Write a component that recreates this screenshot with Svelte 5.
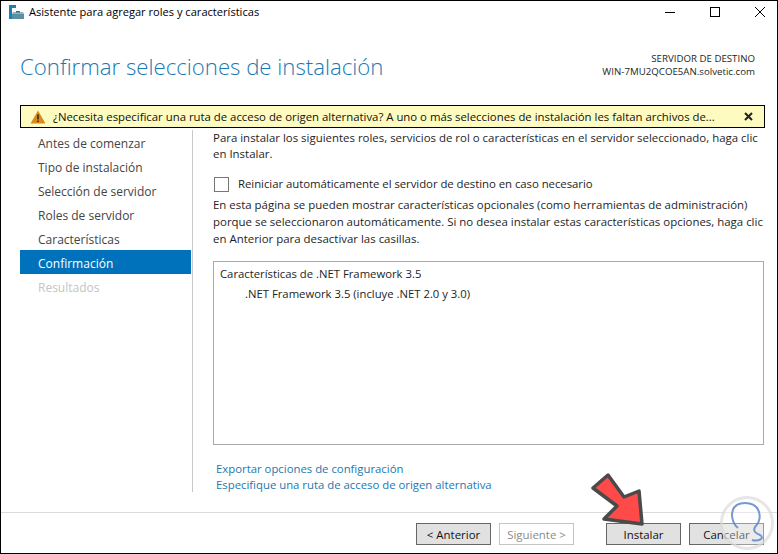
<script>
  const steps = [
    { label: "Antes de comenzar" },
    { label: "Tipo de instalación" },
    { label: "Selección de servidor" },
    { label: "Roles de servidor" },
    { label: "Características" },
    { label: "Confirmación", active: true },
    { label: "Resultados", disabled: true }
  ];
</script>

<div class="window">
  <header class="titlebar">
    <svg class="app-icon" width="16" height="16" viewBox="0 0 16 16">
      <rect x="0" y="0" width="7" height="3" fill="#1f7fb5" />
      <rect x="0" y="3" width="3" height="11" fill="#1f7fb5" />
      <path d="M3 9h12v5H3z" fill="#5b8fa3" />
      <path d="M4 7h10l1 2H3z" fill="#8fb6c4" />
      <rect x="7" y="6" width="4" height="1.5" fill="#47697a" />
    </svg>
    <span class="title">Asistente para agregar roles y características</span>
    <div class="controls">
      <svg width="12" height="12" viewBox="0 0 12 12"><path d="M1 6.5h10" stroke="#000" /></svg>
      <svg width="12" height="12" viewBox="0 0 12 12"><rect x="1.5" y="1.5" width="9" height="9" fill="none" stroke="#000" /></svg>
      <svg width="12" height="12" viewBox="0 0 12 12"><path d="M1 1l10 10M11 1L1 11" stroke="#000" fill="none" /></svg>
    </div>
  </header>

  <section class="heading">
    <h1>Confirmar selecciones de instalación</h1>
    <div class="server">
      <div>SERVIDOR DE DESTINO</div>
      <div>WIN-7MU2QCOE5AN.solvetic.com</div>
    </div>
  </section>

  <div class="banner">
    <svg class="banner-icon" width="16" height="14" viewBox="0 0 16 14">
      <path d="M8 0.5L15.5 13.5H0.5z" fill="#d98a1f" />
      <rect x="7.2" y="4.5" width="1.6" height="5" fill="#3a2a10" />
      <rect x="7.2" y="10.5" width="1.6" height="1.6" fill="#3a2a10" />
    </svg>
    <span class="banner-text">¿Necesita especificar una ruta de acceso de origen alternativa? A uno o más selecciones de instalación les faltan archivos de...</span>
    <svg class="banner-close" width="9" height="9" viewBox="0 0 9 9">
      <path d="M1 1l7 7M8 1L1 8" stroke="#222" stroke-width="2" />
    </svg>
  </div>

  <div class="body">
    <nav class="steps">
      {#each steps as step}
        <div class="step" class:active={step.active} class:disabled={step.disabled}>{step.label}</div>
      {/each}
    </nav>
    <main class="content">
      <p class="intro">Para instalar los siguientes roles, servicios de rol o características en el servidor seleccionado, haga clic en Instalar.</p>
      <label class="restart"><span class="box"></span>Reiniciar automáticamente el servidor de destino en caso necesario</label>
      <p class="note">En esta página se pueden mostrar características opcionales (como herramientas de administración) porque se seleccionaron automáticamente. Si no desea instalar estas características opciones, haga clic en Anterior para desactivar las casillas.</p>
      <div class="list">
        <div>Características de .NET Framework 3.5</div>
        <div class="indent">.NET Framework 3.5 (incluye .NET 2.0 y 3.0)</div>
      </div>
      <div class="links">
        <span>Exportar opciones de configuración</span>
        <span>Especifique una ruta de acceso de origen alternativa</span>
      </div>
    </main>
  </div>

  <footer class="footer">
    <button>&lt; Anterior</button>
    <button class="off">Siguiente &gt;</button>
    <button class="install">Instalar</button>
    <button>Cancelar</button>
  </footer>

  <svg class="arrow" width="80" height="70" viewBox="0 0 80 70">
    <path d="M5 18L20 5L36 27L51 21L54 54L16 49L29 36z" fill="#ff4a4a" stroke="#4a4a4a" stroke-width="3.5" stroke-linejoin="round" />
  </svg>

  <svg class="mark" width="56" height="56" viewBox="0 0 56 56">
    <circle cx="28" cy="28" r="25.5" fill="#fff" fill-opacity="0.35" stroke="#dcdcdc" stroke-opacity="0.7" stroke-width="3" />
    <path d="M19 33C11 27 9 8 26 8C42 8 44 24 36 32C34 36 36 38 41 40C46 43 40 47 33 45" fill="none" stroke="#5f86c8" stroke-opacity="0.85" stroke-width="2" />
  </svg>
</div>

<style>
  :global(body) {
    margin: 0;
  }
  .window {
    position: relative;
    width: 778px;
    height: 554px;
    box-sizing: border-box;
    border: 1px solid #000;
    background: #fff;
    color: #1e1e1e;
    font-family: "Open Sans", "Noto Sans", sans-serif;
    font-size: 11.45px;
    display: flex;
    flex-direction: column;
    overflow: hidden;
  }
  .titlebar {
    height: 23px;
    display: flex;
    align-items: center;
    padding-left: 8px;
    gap: 4px;
    color: #000;
  }
  .title {
    font-size: 11.1px;
    margin-bottom: 2px;
  }
  .controls {
    margin-left: auto;
    margin-bottom: 2px;
    display: flex;
    gap: 33px;
    padding-right: 11px;
  }
  .heading {
    height: 81px;
    padding: 0 22px 0 19px;
    display: flex;
    justify-content: space-between;
    align-items: flex-start;
  }
  h1 {
    margin: 27px 0 0;
    font-size: 22.2px;
    font-weight: 300;
    color: #1a79b0;
  }
  .server {
    margin-top: 28px;
    text-align: right;
    font-size: 9.7px;
    line-height: 13px;
  }
  .banner {
    height: 21px;
    margin: 0 12px 0 19px;
    padding-left: 9px;
    border: 1px solid #000;
    background: #fdfbc0;
    display: flex;
    align-items: center;
    gap: 7px;
    color: #111;
    font-size: 11.36px;
  }
  .banner-icon,
  .banner-close {
    flex: none;
  }
  .banner-text {
    flex: 1;
    min-width: 0;
    white-space: nowrap;
  }
  .banner-close {
    margin-right: 11px;
  }
  .body {
    flex: 1;
    display: flex;
    padding: 2px 0 0 19px;
  }
  .steps {
    width: 171px;
    height: 362px;
    box-sizing: border-box;
    flex: none;
  }
  .step {
    height: 24px;
    line-height: 27px;
    padding-left: 18px;
    color: #444;
    font-size: 12px;
  }
  .step.active {
    background: #0072bc;
    color: #fff;
  }
  .step.disabled {
    color: #c4c4c4;
  }
  .content {
    margin-left: 1px;
    width: 576px;
    height: 362px;
    box-sizing: border-box;
    border-left: 1px solid #c8c8c8;
    padding-left: 20px;
    line-height: 16px;
  }
  p {
    margin: 0;
  }
  .restart {
    margin-top: 13px;
    display: flex;
    align-items: center;
    height: 18px;
    font-size: 11.4px;
    letter-spacing: -0.05px;
  }
  .box {
    width: 13px;
    height: 13px;
    border: 1px solid #777;
    margin: 0 9px 0 1px;
  }
  .note {
    margin-top: 3px;
    line-height: 17px;
  }
  .list {
    margin: 14px 4px 0 0;
    height: 184px;
    box-sizing: border-box;
    border: 1px solid #aaa;
    padding: 2px 6px;
    line-height: 20px;
    font-size: 11.3px;
  }
  .indent {
    padding-left: 25px;
  }
  .links {
    margin-top: 16px;
    padding-left: 3px;
    display: flex;
    flex-direction: column;
    color: #1a79b0;
    font-size: 11.35px;
  }
  .footer {
    position: absolute;
    left: 0;
    right: 0;
    bottom: 0;
    height: 41px;
    border-top: 1px solid #dcdcdc;
    display: flex;
    gap: 8px;
    padding: 10px 13px 0 0;
    box-sizing: border-box;
    justify-content: flex-end;
  }
  button {
    width: 75px;
    height: 22px;
    padding: 0;
    background: #e1e1e1;
    border: 1px solid #666;
    font: inherit;
    color: #111;
  }
  .off {
    background: #fff;
    border-color: #c4c4c4;
    color: #8a8a8a;
  }
  .install {
    margin-left: 24px;
  }
  .arrow {
    position: absolute;
    left: 587px;
    top: 469px;
  }
  .mark {
    position: absolute;
    left: 718px;
    top: 494px;
  }
</style>
